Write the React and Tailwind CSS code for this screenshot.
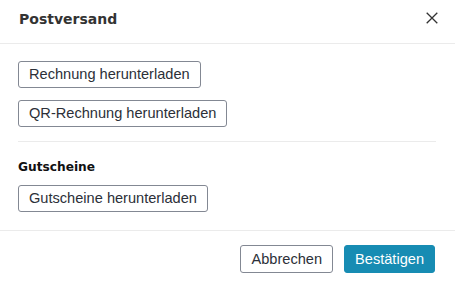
import React from "react";

const OutlineButton = ({ children }) => (
  <button className="self-start rounded-[3px] border border-[#838893] bg-white px-[10px] py-[4px] text-[14.6px] leading-[17px] text-[#2c3038]">
    {children}
  </button>
);

const App = () => {
  return (
    <div className="h-[282px] w-[455px] bg-white font-['Liberation_Sans',Arial,sans-serif]">
      {/* Header */}
      <div className="flex h-[44px] items-start justify-between border-b border-[#ebebeb] pl-[19px] pr-[17px] pt-[11px]">
        <h2 className="font-['DejaVu_Sans',sans-serif] text-[14px] font-bold leading-[16px] text-[#333333]">
          Postversand
        </h2>
        <svg
          className="mt-[1px] h-[12px] w-[12px] text-[#333333]"
          viewBox="0 0 12 12"
          fill="none"
          stroke="currentColor"
          strokeWidth="1.3"
        >
          <path d="M0.7 0.7l10.6 10.6M11.3 0.7L0.7 11.3" />
        </svg>
      </div>

      {/* Body */}
      <div className="flex flex-col px-[18px] pt-[17px]">
        <OutlineButton>Rechnung herunterladen</OutlineButton>
        <div className="mt-[12px] flex">
          <OutlineButton>QR-Rechnung herunterladen</OutlineButton>
        </div>
        <div className="mr-[1px] mt-[14px] border-t border-[#ebebeb]" />
        <h3 className="mt-[18px] font-['DejaVu_Sans',sans-serif] text-[12.2px] font-bold leading-[14px] text-[#111111]">
          Gutscheine
        </h3>
        <div className="mt-[11px] flex">
          <OutlineButton>Gutscheine herunterladen</OutlineButton>
        </div>
      </div>

      {/* Footer */}
      <div className="mt-[18px] flex justify-end gap-[11px] border-t border-[#ebebeb] pr-[20px] pt-[14px]">
        <button className="rounded-[3px] border border-[#838893] bg-white px-[10px] py-[5px] text-[14.6px] leading-[16px] text-[#2c3038]">
          Abbrechen
        </button>
        <button className="rounded-[3px] border border-[#178cb3] bg-[#178cb3] px-[10px] py-[5px] text-[14.6px] leading-[16px] text-white">
          Bestätigen
        </button>
      </div>
    </div>
  );
};

export default App;
